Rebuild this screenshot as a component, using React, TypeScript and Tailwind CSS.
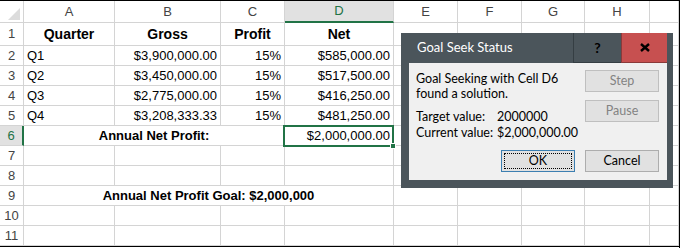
const grid = "border-r border-b border-[#d4d4d4]";
const sheetFont = "font-['Liberation_Sans',Arial,sans-serif]";

type CellDef = {
  text?: string;
  align?: "left" | "right" | "center";
  bold?: boolean;
  span?: number;
};

const cols = ["A", "B", "C", "D", "E", "F", "G", "H", ""];

const rows: CellDef[][] = [
  [
    { text: "Quarter", align: "center", bold: true },
    { text: "Gross", align: "center", bold: true },
    { text: "Profit", align: "center", bold: true },
    { text: "Net", align: "center", bold: true },
  ],
  [
    { text: "Q1" },
    { text: "$3,900,000.00", align: "right" },
    { text: "15%", align: "right" },
    { text: "$585,000.00", align: "right" },
  ],
  [
    { text: "Q2" },
    { text: "$3,450,000.00", align: "right" },
    { text: "15%", align: "right" },
    { text: "$517,500.00", align: "right" },
  ],
  [
    { text: "Q3" },
    { text: "$2,775,000.00", align: "right" },
    { text: "15%", align: "right" },
    { text: "$416,250.00", align: "right" },
  ],
  [
    { text: "Q4" },
    { text: "$3,208,333.33", align: "right" },
    { text: "15%", align: "right" },
    { text: "$481,250.00", align: "right" },
  ],
  [
    { text: "Annual Net Profit:", align: "center", bold: true, span: 3 },
    { text: "$2,000,000.00", align: "right" },
  ],
  [],
  [],
  [
    { text: "Annual Net Profit Goal: $2,000,000", align: "center", bold: true, span: 4 },
  ],
  [],
  [],
];

function Cell({ cell, big }: { cell: CellDef; big?: boolean }) {
  const span =
    cell.span === 3 ? "col-span-3" : cell.span === 4 ? "col-span-4" : "";
  const justify =
    cell.align === "right"
      ? "justify-end"
      : cell.align === "center"
        ? "justify-center"
        : "justify-start";
  return (
    <div
      className={`${grid} ${span} flex items-center ${justify} overflow-visible whitespace-nowrap px-[3px] text-black ${
        cell.bold ? "font-bold" : ""
      } ${big ? "text-[14px]" : "text-[13px]"}`}
    >
      {cell.text}
    </div>
  );
}

function Sheet() {
  return (
    <div
      className={`grid grid-cols-[24px_91px_106px_64px_109px_64px_64px_63px_65px_1fr] grid-rows-[22px_23px_repeat(10,20px)] border-b border-black ${sheetFont}`}
    >
      {/* corner */}
      <div className={`${grid} relative`}>
        <svg className="absolute left-[8px] top-[7px]" width="12" height="12" viewBox="0 0 12 12">
          <polygon points="12,0 12,12 0,12" fill="#dcdcdc" />
        </svg>
      </div>
      {cols.map((c) =>
        c === "D" ? (
          <div
            key={c}
            className="flex items-center justify-center border-r border-b-2 border-r-[#d4d4d4] border-b-[#217346] bg-[#e1e1e1] text-[13px] text-[#217346]"
          >
            {c}
          </div>
        ) : (
          <div key={c || "i"} className={`${grid} flex items-center justify-center text-[13px] text-[#444]`}>
            {c}
          </div>
        ),
      )}
      {rows.map((row, i) => {
        const n = i + 1;
        const used = row.reduce((s, c) => s + (c.span ?? 1), 0);
        const blanks = Array.from({ length: 9 - used });
        return [
          n === 6 ? (
            <div
              key={`h${n}`}
              className="flex items-center justify-center border-b border-r-2 border-b-[#d4d4d4] border-r-[#217346] bg-[#e1e1e1] text-[13px] text-[#217346]"
            >
              {n}
            </div>
          ) : (
            <div key={`h${n}`} className={`${grid} flex items-center justify-center text-[13px] text-[#444]`}>
              {n}
            </div>
          ),
          ...row.map((c, j) => <Cell key={`${n}-${j}`} cell={c} big={n === 1} />),
          ...blanks.map((_, j) => <div key={`${n}-b${j}`} className={grid} />),
        ];
      })}
    </div>
  );
}

function DlgButton({
  label,
  disabled,
  focused,
}: {
  label: string;
  disabled?: boolean;
  focused?: boolean;
}) {
  return (
    <div
      className={`flex h-[22px] w-[74px] items-center justify-center border bg-[#e1e1e1] p-[2px] text-[12.5px] ${
        disabled
          ? "border-[#bfbfbf] text-[#838383]"
          : focused
            ? "border-[#3c7fb1] text-black"
            : "border-[#adadad] text-black"
      }`}
    >
      <div
        className={`flex h-full w-full items-center justify-center ${
          focused ? "border border-dotted border-black" : ""
        }`}
      >
        {label}
      </div>
    </div>
  );
}

function GoalSeekDialog() {
  return (
    <div className="absolute left-[401px] top-[32px] flex h-[155px] w-[272px] flex-col bg-[#4b555b] font-['Lato','Liberation_Sans',sans-serif]">
      <div className="flex h-[30px] items-stretch">
        <div className="flex flex-1 items-center pl-[16px] text-[13px] text-white">Goal Seek Status</div>
        <div className="flex w-[48px] items-center justify-center border-b border-l border-[#353e43] text-[14px] font-bold text-black">
          ?
        </div>
        <div className="flex w-[46px] items-center justify-center border-b border-l border-[#8a3a3a] bg-[#c75050]">
          <svg width="10" height="9" viewBox="0 0 10 9">
            <path d="M1 1 L9 8 M9 1 L1 8" stroke="#000" strokeWidth="2.4" />
          </svg>
        </div>
        <div className="w-[6px]" />
      </div>
      <div className="mb-[8px] ml-[8px] mr-[6px] flex flex-1 flex-col bg-[#f0f0f0] px-[7px] pt-[7px] text-[12.5px] text-black">
        <div className="flex justify-between">
          <div className="pt-[1px]">
            <div className="leading-[15px]">Goal Seeking with Cell D6</div>
            <div className="leading-[15px]">found a solution.</div>
            <div className="mt-[8px] grid grid-cols-[81px_auto] leading-[16px]">
              <span>Target value:</span>
              <span>2000000</span>
              <span>Current value:</span>
              <span>$2,000,000.00</span>
            </div>
          </div>
          <div className="mr-[1px] flex flex-col gap-[8px]">
            <DlgButton label="Step" disabled />
            <DlgButton label="Pause" disabled />
          </div>
        </div>
        <div className="mr-[1px] mt-auto mb-[8px] flex justify-end gap-[10px]">
          <DlgButton label="OK" focused />
          <DlgButton label="Cancel" />
        </div>
      </div>
    </div>
  );
}

export default function App() {
  return (
    <div className="relative h-[248px] w-[680px] overflow-hidden border-t border-r border-black bg-white">
      <Sheet />
      {/* active cell D6 */}
      <div className="pointer-events-none absolute left-[283px] top-[124px] h-[22px] w-[111px] border-2 border-[#217346]" />
      <div className="pointer-events-none absolute left-[390px] top-[142px] h-[6px] w-[6px] border border-white bg-[#217346]" />
      <GoalSeekDialog />
    </div>
  );
}
